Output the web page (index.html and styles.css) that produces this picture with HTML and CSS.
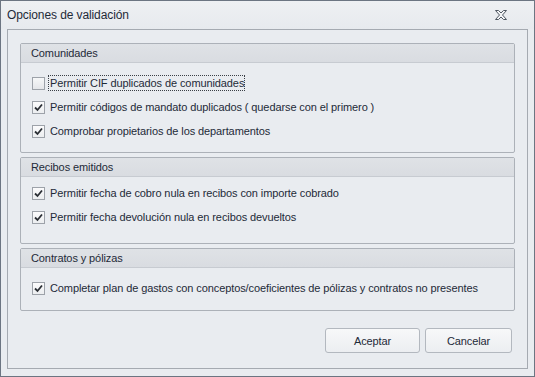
FILE: index.html
```html
<!DOCTYPE html>
<html lang="es">
<head>
<meta charset="utf-8">
<title>Opciones de validación</title>
<link rel="stylesheet" href="styles.css">
</head>
<body>
<div class="window">
  <div class="titlebar">
    <span class="title">Opciones de validación</span>
    <svg class="close" width="12" height="10" viewBox="0 0 12 10">
      <polygon points="0.5,0.5 3.5,0.5 6,3 8.5,0.5 11.5,0.5 7.5,5 11.5,9.5 8.5,9.5 6,7 3.5,9.5 0.5,9.5 4.5,5" fill="#f4f5f7" stroke="#505862" stroke-width="1" stroke-linejoin="miter"/>
    </svg>
  </div>
  <div class="panel">
    <div class="group g1">
      <div class="ghead">Comunidades</div>
      <div class="gbody">
        <div class="row"><span class="cb"></span><span class="lbl focus">Permitir CIF duplicados de comunidades</span></div>
        <div class="row"><span class="cb on"><svg viewBox="0 0 9 9" width="9" height="9"><path d="M1 4.5 L3.5 7 L8 1.5" fill="none" stroke="#2b2f35" stroke-width="1.8"/></svg></span><span class="lbl">Permitir códigos de mandato duplicados ( quedarse con el primero )</span></div>
        <div class="row"><span class="cb on"><svg viewBox="0 0 9 9" width="9" height="9"><path d="M1 4.5 L3.5 7 L8 1.5" fill="none" stroke="#2b2f35" stroke-width="1.8"/></svg></span><span class="lbl">Comprobar propietarios de los departamentos</span></div>
      </div>
    </div>
    <div class="group g2">
      <div class="ghead">Recibos emitidos</div>
      <div class="gbody">
        <div class="row"><span class="cb on"><svg viewBox="0 0 9 9" width="9" height="9"><path d="M1 4.5 L3.5 7 L8 1.5" fill="none" stroke="#2b2f35" stroke-width="1.8"/></svg></span><span class="lbl">Permitir fecha de cobro nula en recibos con importe cobrado</span></div>
        <div class="row"><span class="cb on"><svg viewBox="0 0 9 9" width="9" height="9"><path d="M1 4.5 L3.5 7 L8 1.5" fill="none" stroke="#2b2f35" stroke-width="1.8"/></svg></span><span class="lbl">Permitir fecha devolución nula en recibos devueltos</span></div>
      </div>
    </div>
    <div class="group g3">
      <div class="ghead">Contratos y pólizas</div>
      <div class="gbody">
        <div class="row"><span class="cb on"><svg viewBox="0 0 9 9" width="9" height="9"><path d="M1 4.5 L3.5 7 L8 1.5" fill="none" stroke="#2b2f35" stroke-width="1.8"/></svg></span><span class="lbl">Completar plan de gastos con conceptos/coeficientes de pólizas y contratos no presentes</span></div>
      </div>
    </div>
    <div class="buttons">
      <button class="btn ok">Aceptar</button>
      <button class="btn cancel">Cancelar</button>
    </div>
  </div>
</div>
</body>
</html>
```
FILE: styles.css
```css
* { box-sizing: border-box; }
html, body { margin: 0; padding: 0; background: #e9ecf0; }
body {
  font-family: "Liberation Sans", Arial, sans-serif;
  font-size: 11px;
  letter-spacing: -0.1px;
  color: #1e2a38;
}
.window {
  width: 535px;
  height: 377px;
  border: 1px solid #6c7582;
  background: #e9ecf0;
  display: flex;
  flex-direction: column;
}
.titlebar {
  height: 28px;
  flex: none;
  display: flex;
  align-items: center;
  justify-content: space-between;
  padding: 0 27px 0 6px;
  background: linear-gradient(#eef0f3, #e7eaee);
}
.title {
  font-size: 12px;
  color: #1e2a38;
}
.close { display: block; margin-top: -1px; }
.panel {
  margin: 0 6px 7px 6px;
  flex: 1;
  border: 1px solid #a5aab1;
  padding: 13px 12px 0 12px;
  display: flex;
  flex-direction: column;
  gap: 4px;
}
.group {
  border: 1px solid #acb1b8;
  border-radius: 2px;
  background: #e9ecf0;
}
.ghead {
  height: 19px;
  line-height: 18px;
  padding-left: 10px;
  background: linear-gradient(#dfe2e6, #d9dce1);
  border-bottom: 1px solid #c7cbd1;
}
.g1 .gbody { height: 89px; padding-top: 8px; }
.g2 .gbody { height: 66px; padding-top: 4px; }
.g3 .gbody { height: 42px; padding-top: 8px; }
.row {
  height: 24px;
  display: flex;
  align-items: center;
  padding-left: 11px;
}
.cb {
  width: 13px;
  height: 13px;
  border: 1px solid #9da2a9;
  background: linear-gradient(#f6f7f8, #e4e6e9);
  display: flex;
  align-items: center;
  justify-content: center;
  margin-right: 3px;
  flex: none;
}
.cb.on { background: linear-gradient(#fbfbfc, #eceef0); }
.cb svg { display: block; }
.lbl {
  padding: 1px 0 1px 1px;
  border: 1px dotted transparent;
  white-space: nowrap;
}
.lbl.focus { border-color: #3a3f46; }
.buttons {
  display: flex;
  justify-content: flex-end;
  gap: 5px;
  margin-top: 13px;
  padding-right: 3px;
}
.btn {
  height: 25px;
  font-family: inherit;
  font-size: 11px;
  letter-spacing: inherit;
  color: #1e2a38;
  border: 1px solid #b3b8bf;
  border-radius: 3px;
  background: linear-gradient(#f7f8f9, #eceef1);
  padding: 0;
}
.ok { width: 95px; }
.cancel { width: 87px; }
```
